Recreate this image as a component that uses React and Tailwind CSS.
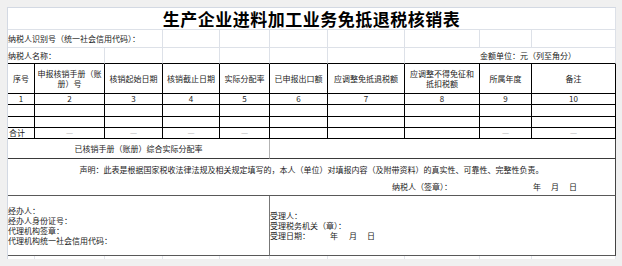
const headers = [
    ['序号'],
    ['申报核销手册（账', '册）号'],
    ['核销起始日期'],
    ['核销截止日期'],
    ['实际分配率'],
    ['已申报出口额'],
    ['应调整免抵退税额'],
    ['应调整不得免征和', '抵扣税额'],
    ['所属年度'],
    ['备注'],
];

const totals = ['合计', '—', '—', '—', '—', '', '', '', '—', '—'];

export default function App() {
    const cols = Array.from({ length: 10 }, (_, i) => i);

    return (
        <div className="min-h-screen bg-[#f0f0f0] pl-[7px] pt-[7px] font-['Noto_Sans_CJK_SC',sans-serif] text-[8px] leading-[10px] text-[#1a1a1a]">
            <div className="grid w-[609px] grid-cols-[27px_70px_58px_57px_50px_58px_77px_75px_52px_84px] grid-rows-[22px_18px_16px_30px_11px_12px_11px_11px_20px_37px_60px_3px] border-l border-t border-[#d3d9e3] bg-white">
                {/* title */}
                <div className="col-span-10 flex items-center justify-center border-b border-r border-[#dde1e8] pt-[1px] text-[17px] font-bold leading-[20px] tracking-[0.5px] text-black">
                    生产企业进料加工业务免抵退税核销表
                </div>

                {/* taxpayer id */}
                <div className="col-span-3 flex items-center whitespace-nowrap border-b border-r border-[#dde1e8]">
                    纳税人识别号（统一社会信用代码）：
                </div>
                {cols.slice(3).map((i) => (
                    <div key={i} className="border-b border-r border-[#dde1e8]" />
                ))}

                {/* taxpayer name */}
                <div className="col-span-2 flex items-center border-b border-r border-b-black border-r-[#dde1e8]">
                    纳税人名称：
                </div>
                {cols.slice(2, 7).map((i) => (
                    <div key={i} className="border-b border-r border-b-black border-r-[#dde1e8]" />
                ))}
                <div className="col-span-3 flex items-center whitespace-nowrap border-b border-r border-b-black border-r-[#dde1e8] pl-[75px]">
                    金额单位：元（列至角分）
                </div>

                {/* header */}
                {headers.map((lines, i) => (
                    <div
                        key={i}
                        className="flex flex-col items-center justify-center whitespace-nowrap border-b border-r border-black text-center"
                    >
                        {lines.map((line) => (
                            <span key={line}>{line}</span>
                        ))}
                    </div>
                ))}

                {/* column numbers */}
                {cols.map((i) => (
                    <div
                        key={i}
                        className="flex items-center justify-center border-b border-r border-black"
                    >
                        {i + 1}
                    </div>
                ))}

                {/* empty rows */}
                {cols.map((i) => (
                    <div key={`a${i}`} className="border-b border-r border-black" />
                ))}
                {cols.map((i) => (
                    <div key={`b${i}`} className="border-b border-r border-black" />
                ))}

                {/* totals */}
                {totals.map((value, i) =>
                    i === 0 ? (
                        <div key={i} className="flex items-center border-b border-r border-black pl-[1px]">
                            {value}
                        </div>
                    ) : (
                        <div
                            key={i}
                            className="flex items-center justify-center border-b border-r border-black text-[#b5b5b5]"
                        >
                            {value}
                        </div>
                    ),
                )}

                {/* allocation rate */}
                <div className="col-span-5 flex items-center justify-center border-b border-r border-b-[#3a3a3a] border-r-[#b3b3b3]">
                    已核销手册（账册）综合实际分配率
                </div>
                <div className="col-span-5 border-b border-r border-b-[#3a3a3a] border-r-[#444]" />

                {/* declaration */}
                <div className="col-span-10 flex flex-col border-b border-r border-b-[#595959] border-r-[#444] pt-[6px]">
                    <p className="whitespace-nowrap text-center">
                        声明：此表是根据国家税收法律法规及相关规定填写的，本人（单位）对填报内容（及附带资料）的真实性、可靠性、完整性负责。
                    </p>
                    <div className="mt-[7px] flex whitespace-nowrap pl-[384px]">
                        <span>纳税人（签章）：</span>
                        <span className="ml-[81px]">年</span>
                        <span className="ml-[10px]">月</span>
                        <span className="ml-[10px]">日</span>
                    </div>
                </div>

                {/* agent / receiver */}
                <div className="col-span-5 flex flex-col justify-center whitespace-nowrap border-b border-r border-b-[#595959] border-r-[#777]">
                    <span>经办人：</span>
                    <span>经办人身份证号：</span>
                    <span>代理机构签章：</span>
                    <span>代理机构统一社会信用代码：</span>
                </div>
                <div className="col-span-5 flex flex-col justify-center whitespace-nowrap border-b border-r border-b-[#595959] border-r-[#444]">
                    <span>受理人：</span>
                    <span>受理税务机关（章）：</span>
                    <div className="flex">
                        <span>受理日期：</span>
                        <span className="ml-[20px]">年</span>
                        <span className="ml-[11px]">月</span>
                        <span className="ml-[10px]">日</span>
                    </div>
                </div>

                {/* trailing gridlines */}
                {cols.map((i) => (
                    <div key={`c${i}`} className="border-r border-[#e3e6ec]" />
                ))}
            </div>
        </div>
    );
}
